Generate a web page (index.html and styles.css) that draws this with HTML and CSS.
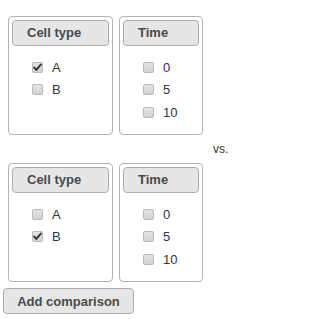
FILE: index.html
```html
<!DOCTYPE html>
<html>
<head>
<meta charset="utf-8">
<link rel="stylesheet" href="styles.css">
</head>
<body>
<div class="page">
  <div class="row">
    <div class="panel panel-cell">
      <div class="head">Cell type</div>
      <ul class="opts">
        <li><span class="cb checked"><svg viewBox="0 0 11 11" width="11" height="11"><path d="M2.2 5.6 L4.3 7.9 L8.8 2.6" fill="none" stroke="#333" stroke-width="2" stroke-linecap="round" stroke-linejoin="round"/></svg></span>A</li>
        <li><span class="cb"></span>B</li>
      </ul>
    </div>
    <div class="panel panel-time">
      <div class="head">Time</div>
      <ul class="opts">
        <li><span class="cb"></span>0</li>
        <li><span class="cb"></span>5</li>
        <li><span class="cb"></span>10</li>
      </ul>
    </div>
  </div>
  <div class="vs">vs.</div>
  <div class="row">
    <div class="panel panel-cell">
      <div class="head">Cell type</div>
      <ul class="opts">
        <li><span class="cb"></span>A</li>
        <li><span class="cb checked"><svg viewBox="0 0 11 11" width="11" height="11"><path d="M2.2 5.6 L4.3 7.9 L8.8 2.6" fill="none" stroke="#333" stroke-width="2" stroke-linecap="round" stroke-linejoin="round"/></svg></span>B</li>
      </ul>
    </div>
    <div class="panel panel-time">
      <div class="head">Time</div>
      <ul class="opts">
        <li><span class="cb"></span>0</li>
        <li><span class="cb"></span>5</li>
        <li><span class="cb"></span>10</li>
      </ul>
    </div>
  </div>
  <button class="add">Add comparison</button>
</div>
</body>
</html>
```

FILE: styles.css
```css
html, body {
  margin: 0;
  padding: 0;
  background: #ffffff;
}
body {
  font-family: "Liberation Sans", Arial, sans-serif;
  color: #333;
}
.page {
  padding: 16px 0 0 0;
}
.row {
  display: flex;
  gap: 6px;
  margin-left: 8px;
}
.panel {
  box-sizing: border-box;
  height: 119px;
  border: 1px solid #b4b4b4;
  border-radius: 4px;
  padding: 3px;
}
.panel-cell { width: 105px; }
.panel-time { width: 84px; }
.head {
  box-sizing: border-box;
  height: 26px;
  border: 1px solid #adadad;
  border-radius: 4px;
  background: #e6e6e6;
  font-size: 13px;
  font-weight: bold;
  color: #4a4a4a;
  line-height: 24px;
  padding-left: 14px;
}
.opts {
  list-style: none;
  margin: 0;
  padding: 10px 0 0 20px;
}
.opts li {
  display: flex;
  align-items: center;
  height: 22.5px;
  font-size: 13px;
  color: #2e3440;
}
.cb {
  box-sizing: border-box;
  width: 11px;
  height: 11px;
  border: 1px solid #b9b9b9;
  border-radius: 2px;
  background: linear-gradient(#e4e4e4, #d2d2d2);
  margin-right: 9px;
  display: flex;
  align-items: center;
  justify-content: center;
  flex: none;
}
.cb svg {
  display: block;
  margin: -1px;
}
.vs {
  font-size: 12px;
  line-height: 14px;
  margin: 7px 0 7px 213px;
  color: #333;
}
.add {
  display: block;
  box-sizing: border-box;
  margin: 6px 0 0 3px;
  width: 131px;
  height: 26px;
  border: 1px solid #adadad;
  border-radius: 4px;
  background: #e6e6e6;
  font-family: "Liberation Sans", Arial, sans-serif;
  font-size: 13px;
  font-weight: bold;
  color: #4a4a4a;
  padding: 0;
}
```
